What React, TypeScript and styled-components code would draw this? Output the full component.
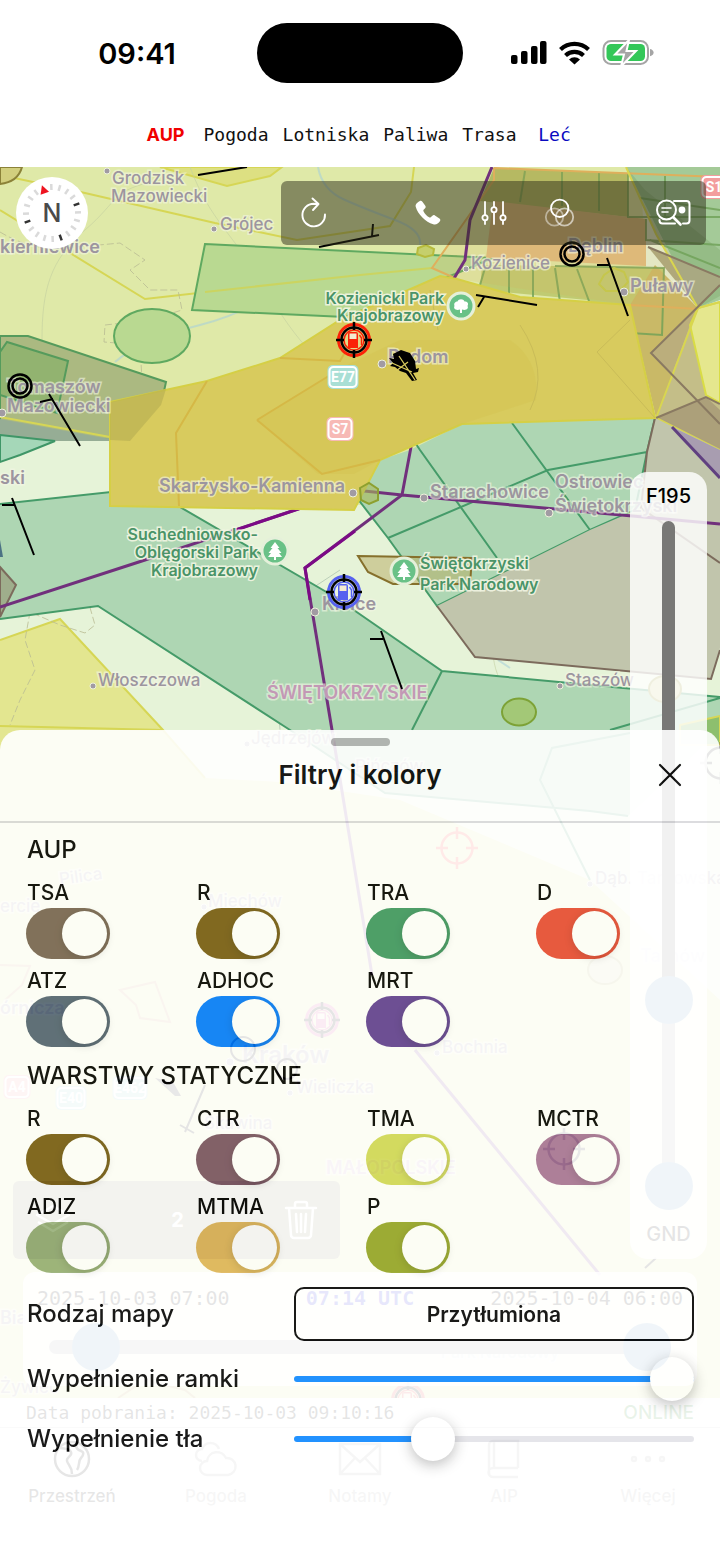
import { useState } from "react";
import styled, { createGlobalStyle } from "styled-components";

type Filter = { name: string; color: string };

const menu = [
  { name: "AUP", color: "#f00000", bold: true },
  { name: "Pogoda", color: "#111" },
  { name: "Lotniska", color: "#111" },
  { name: "Paliwa", color: "#111" },
  { name: "Trasa", color: "#111" },
  { name: "Leć", color: "#0a0ac0" },
];

const aupFilters: Filter[] = [
  { name: "TSA", color: "#776454" },
  { name: "R", color: "#765b14" },
  { name: "TRA", color: "#3e9763" },
  { name: "D", color: "#e84a35" },
  { name: "ATZ", color: "#526374" },
  { name: "ADHOC", color: "#007bff" },
  { name: "MRT", color: "#603e93" },
];

const staticFilters: Filter[] = [
  { name: "R", color: "#765b14" },
  { name: "CTR", color: "#785263" },
  { name: "TMA", color: "#d2d95a" },
  { name: "MCTR", color: "#a77399" },
  { name: "ADIZ", color: "#96ae77" },
  { name: "MTMA", color: "#dfb55b" },
  { name: "P", color: "#95a42a" },
];

const App = () => {
  const [frame, setFrame] = useState(100);
  const [background, setBackground] = useState(33);
  const [open, setOpen] = useState(true);

  return (
    <Screen>
      <GlobalStyle />
      <StatusBar>
        <Clock>09:41</Clock>
        <Island />
        <StatusIcons />
      </StatusBar>
      <Menu>
        {menu.map((item) => (
          <MenuButton key={item.name} $color={item.color} $bold={item.bold}>
            {item.name}
          </MenuButton>
        ))}
      </Menu>

      <MapArea>
        <AirspaceMap />
        <MapTop>
          <Compass />
          <Toolbar>
            <ToolButton aria-label="Odśwież">
              <RefreshIcon />
            </ToolButton>
            <ToolGroup>
              <ToolButton aria-label="Telefon">
                <PhoneIcon />
              </ToolButton>
              <ToolButton aria-label="Ustawienia">
                <SlidersIcon />
              </ToolButton>
              <ToolButton aria-label="Filtry" onClick={() => setOpen(true)}>
                <CirclesIcon />
              </ToolButton>
            </ToolGroup>
            <ToolButton aria-label="Szukaj">
              <SearchIcon />
            </ToolButton>
          </Toolbar>
        </MapTop>
        <MapMiddle>
          <LayerBox>
            <LayersIcon />
            <b>2</b>
            <TrashIcon />
          </LayerBox>
          <LevelPanel>
            <LevelLabel>F195</LevelLabel>
            <LevelTrack>
              <LevelRange type="range" aria-label="Górny poziom" defaultValue={29} />
              <LevelRange type="range" aria-label="Dolny poziom" defaultValue={0} />
            </LevelTrack>
            <LevelLabel>GND</LevelLabel>
          </LevelPanel>
        </MapMiddle>
        <TimePanel>
          <TimeRow>
            <span>2025-10-03 07:00</span>
            <TimeNow>07:14 UTC</TimeNow>
            <span>2025-10-04 06:00</span>
          </TimeRow>
          <TimeTrack>
            <TimeRange type="range" aria-label="Początek" defaultValue={4} />
            <TimeRange type="range" aria-label="Koniec" defaultValue={100} />
          </TimeTrack>
        </TimePanel>
      </MapArea>

      <InfoRow>
        <span>Data pobrania: 2025-10-03 09:10:16</span>
        <Online>ONLINE</Online>
      </InfoRow>
      <Tabs />

      {open && (
        <Sheet>
          <Handle />
          <SheetHeader>
            <h1>Filtry i kolory</h1>
            <CloseButton aria-label="Zamknij" onClick={() => setOpen(false)}>
              <svg width="24" height="24" viewBox="0 0 24 24" fill="none" stroke="#000" strokeWidth="2.2" strokeLinecap="round">
                <path d="M2 2l20 20M22 2L2 22" />
              </svg>
            </CloseButton>
          </SheetHeader>
          <SheetBody>
            <FilterSection title="AUP" prefix="aup" filters={aupFilters} />
            <FilterSection title="WARSTWY STATYCZNE" prefix="static" filters={staticFilters} />
            <Settings>
              <SettingLabel htmlFor="map-type">Rodzaj mapy</SettingLabel>
              <MapTypeButton id="map-type">Przytłumiona</MapTypeButton>
              <SettingLabel htmlFor="frame">Wypełnienie ramki</SettingLabel>
              <Range
                id="frame"
                type="range"
                value={frame}
                $value={frame}
                onChange={(e) => setFrame(Number(e.target.value))}
              />
              <SettingLabel htmlFor="background">Wypełnienie tła</SettingLabel>
              <Range
                id="background"
                type="range"
                value={background}
                $value={background}
                onChange={(e) => setBackground(Number(e.target.value))}
              />
            </Settings>
          </SheetBody>
        </Sheet>
      )}
    </Screen>
  );
};

export default App;

const FilterSection = ({ title, prefix, filters }: { title: string; prefix: string; filters: Filter[] }) => (
  <section>
    <SectionTitle>{title}</SectionTitle>
    <FilterGrid>
      {filters.map(({ name, color }) => (
        <FilterItem key={name}>
          <label htmlFor={prefix + name}>{name}</label>
          <Switch id={prefix + name} type="checkbox" defaultChecked $color={color} />
        </FilterItem>
      ))}
    </FilterGrid>
  </section>
);

const StatusIcons = () => (
  <svg width="144" height="28" viewBox="511 40 144 28">
    <g fill="#000">
      <rect x="511" y="56" width="6.5" height="9" rx="2" />
      <rect x="521" y="52" width="6.5" height="13" rx="2" />
      <rect x="531" y="47" width="6.5" height="18" rx="2" />
      <rect x="540" y="42" width="6.5" height="23" rx="2" />
      <path d="M574.5 65.5l-5.5-5a8 8 0 0 1 11 0z" />
    </g>
    <g fill="none" stroke="#000" strokeWidth="4.2">
      <path d="M560.5 50.5a20.5 20.500 0 0 1 28 0" />
      <path d="M565.5 56.500a13.2 13.2 0 0 1 18 0" />
    </g>
    <rect x="603.5" y="42" width="44.5" height="23" rx="7.5" fill="#fff" stroke="#a5a5a5" strokeWidth="2" />
    <rect x="606.5" y="45" width="38.5" height="17" rx="4.5" fill="#34c759" />
    <path d="M650 50c2.6.6 3.6 2 3.6 3.6s-1 3-3.6 3.6z" fill="#a5a5a5" />
    <path d="M629 41l-14 14.5h9l-3 12 15-15.5h-9.5z" fill="#a5a5a5" stroke="#fff" strokeWidth="2" />
  </svg>
);

const Compass = () => (
  <CompassButton aria-label="Północ">
    <svg width="72" height="72" viewBox="-36 -36 72 72">
      <g transform="rotate(-20)">
        {Array.from({ length: 20 }, (_, i) => i)
          .filter((i) => i > 0)
          .map((i) => (
            <rect
              key={i}
              x="-1"
              y="-29"
              width="2.500"
              height="6"
              fill={i % 5 === 0 ? "#333" : "#dadada"}
              transform={`rotate(${i * 18})`}
            />
          ))}
        <path d="M-4.5 -21L0 -29.5L4.5 -21z" fill="#ee1420" />
      </g>
      <text y="9" textAnchor="middle" fontSize="25" fontWeight="500" fill="#4a4a4a">
        N
      </text>
    </svg>
  </CompassButton>
);

const RefreshIcon = () => (
  <svg width="32" height="32" viewBox="0 0 32 32" fill="none" stroke="#fff" strokeWidth="1.9" strokeLinecap="round" strokeLinejoin="round">
    <path d="M27 17.5A11.3 11.3 0 1 1 15.7 6.8L20 7" />
    <path d="M14.5 1.5L20.5 7L15 13" />
  </svg>
);

const PhoneIcon = () => (
  <svg width="28" height="28" viewBox="0 0 28 28" fill="#fff">
    <path d="M5.5 2.2c1-.7 2.100-.5 2.9.5l2.9 4c.6.9.5 1.7-.2 2.5L9.6 10.7c-.4.5-.4 1 0 1.7 1.2 2.3 3.2 4.3 5.5 5.9.6.4 1.100.4 1.6-.1l1.7-1.5c.8-.7 1.6-.8 2.5-.2l4.5 3c1 .7 1.2 1.7.5 2.7-1.5 2.4-3.8 3.7-6.7 3C11.7 23.5 3.8 15 1.8 8 1 5.4 3 3.6 5.5 2.2z" />
  </svg>
);

const SlidersIcon = () => (
  <svg width="26" height="26" viewBox="0 0 26 26" fill="none" stroke="#fff" strokeWidth="1.8" strokeLinecap="round">
    <path d="M4 2v13M4 20.5V24M13 2v5M13 12.5V24M22 2v13M22 20.5V24" />
    <circle cx="4" cy="17.7" r="2.6" />
    <circle cx="13" cy="9.7" r="2.6" />
    <circle cx="22" cy="17.7" r="2.6" />
  </svg>
);

const CirclesIcon = () => (
  <svg width="32" height="32" viewBox="0 0 32 32" fill="none" stroke="#fff" strokeWidth="1.8">
    <circle cx="10.500" cy="20" r="8.7" opacity="0.45" />
    <circle cx="20.500" cy="20" r="8.7" opacity="0.6" />
    <circle cx="15.700" cy="11.3" r="8.7" />
  </svg>
);

const SearchIcon = () => (
  <svg width="36" height="30" viewBox="0 0 36 30" fill="none" stroke="#fff" strokeWidth="2" strokeLinecap="round">
    <path d="M19 3h12.5a3 3 0 0 1 3 3v16.500a3 3 0 0 1-3 3H28M20 25.5H7.5a3 3 0 0 1-3-3V22" />
    <circle cx="11.5" cy="12" r="9.5" />
    <path d="M18.5 19.500l7 7" strokeWidth="2.6" />
    <path d="M7 10h9M7 14h6" strokeWidth="1.6" />
    <circle cx="27" cy="12" r="2.4" fill="#fff" />
  </svg>
);

const LayersIcon = () => (
  <svg width="36" height="36" viewBox="0 0 36 36" fill="none" stroke="#fff" strokeWidth="2.5" strokeLinejoin="round">
    <path d="M18 4L34 13L18 22L2 13zM3 20l15 9 15-9" />
  </svg>
);

const TrashIcon = () => (
  <svg width="34" height="40" viewBox="0 0 34 40" fill="none" stroke="#fff" strokeWidth="2.5" strokeLinecap="round" strokeLinejoin="round">
    <path d="M2 8h30M11 8V4a2 2 0 0 1 2-2h8a2 2 0 0 1 2 2v4M5 8l2 27a3 3 0 0 0 3 3h14a3 3 0 0 0 3-3l2-27M12 14l1 18M17 14v18M22 14l-1 18" />
  </svg>
);

const Tabs = () => (
  <TabBar>
    <Tab href="#przestrzen" $active>
      <svg viewBox="0 0 40 40">
        <circle cx="20" cy="20" r="17" />
        <path d="M8 9c5 1 9 0 11 4s-5 5-4 9 5 5 5 13M25 5c-2 4 1 6 4 7s3 4 0 7-1 8-4 12" />
      </svg>
      Przestrzeń
    </Tab>
    <Tab href="#pogoda">
      <svg viewBox="0 0 48 40">
        <path d="M15 36a7 7 0 0 1 0-14 10 10 0 0 1 19-3 8.5 8.5 0 0 1 2 17zM10 22c-8-1-8-11 0-12 3-8 14-8 17 0" />
      </svg>
      Pogoda
    </Tab>
    <Tab href="#notamy">
      <svg viewBox="0 0 46 40">
        <path d="M3 5h40v30H3zM3 5l20 18L43 5M3 35l15-16M43 35L28 19" />
      </svg>
      Notamy
    </Tab>
    <Tab href="#aip">
      <svg viewBox="0 0 40 40">
        <path d="M34 29V2H9a4 4 0 0 0-4 4v28a4 4 0 0 0 4 4h25M34 29H9a4 4 0 0 0 0 9M10 2v27" />
      </svg>
      AIP
    </Tab>
    <Tab href="#wiecej">
      <svg viewBox="0 0 40 40">
        <circle cx="6" cy="20" r="2" />
        <circle cx="20" cy="20" r="2" />
        <circle cx="34" cy="20" r="2" />
      </svg>
      Więcej
    </Tab>
  </TabBar>
);

const FuelMarker = ({ x, y, color }: { x: number; y: number; color: string }) => (
  <g transform={`translate(${x} ${y})`}>
    <circle r="15.5" fill="#fff" fillOpacity="0.25" stroke={color} strokeWidth="3" />
    <circle r="10" fill="none" stroke={color} strokeWidth="1.5" />
    <path d="M-6 8V-6a2 2 0 0 1 2-2h6a2 2 0 0 1 2 2V8z" fill={color} />
    <rect x="-4.5" y="-6.5" width="7" height="5.5" fill="#f4ead0" />
    <path d="M5.5 -5l2 3V5" fill="none" stroke={color} strokeWidth="1.5" />
    <circle r="12.500" fill="none" stroke="#000" strokeWidth="2.500" />
    <path d="M-18 0h8M10 0h8M0 -18v8M0 10v8" stroke="#000" strokeWidth="2.500" />
  </g>
);

const Target = ({ x, y, color }: { x: number; y: number; color: string }) => (
  <g transform={`translate(${x} ${y})`} fill="none" stroke={color} strokeWidth="2.500">
    <circle r="15.500" />
    <path d="M-21 0h12M9 0h12M0 -21v12M0 9v12" />
  </g>
);

const DoubleRing = ({ x, y }: { x: number; y: number }) => (
  <g fill="none" stroke="#000" strokeWidth="2.5">
    <circle cx={x} cy={y} r="11.5" />
    <circle cx={x} cy={y} r="7.5" />
  </g>
);

const ParkPin = ({ x, y, leaf }: { x: number; y: number; leaf?: boolean }) => (
  <g transform={`translate(${x} ${y})`}>
    <circle r="13" fill="#69c187" stroke="#e5f0da" strokeWidth="3" />
    {leaf ? (
      <path d="M-1 7V3.5c-4 1.5-7-1-5.5-3.5-1-3 1-4.5 3-4.5 1-3 6-3 7 0 3 0 4.5 2 3 4.5C8 2.5 5 5 1 3.5V7z" fill="#fff" />
    ) : (
      <path d="M0 -9l4.5 6H2.5l4 5H4l3 4H1v3h-2V6h-6l3-4h-2.5l4-5h-2z" fill="#fff" />
    )}
  </g>
);

const Shield = ({ x, y, w, color, text }: { x: number; y: number; w: number; color: string; text: string }) => (
  <g>
    <rect x={x - w / 2} y={y - 12} width={w} height="24" rx="5" fill={color} />
    <rect x={x - w / 2 + 2} y={y - 10} width={w - 4} height="20" rx="4" fill="none" stroke="#fff" strokeWidth="2" />
    <ShieldText x={x} y={y + 5}>
      {text}
    </ShieldText>
  </g>
);

const places = [
  { x: 112, y: 184, text: "Grodzisk" },
  { x: 111, y: 202, text: "Mazowiecki" },
  { x: 220, y: 230, text: "Grójec" },
  { x: 471, y: 269, text: "Kozienice" },
  { x: 98, y: 686, text: "Włoszczowa" },
  { x: 565, y: 686, text: "Staszów" },
  { x: 251, y: 744, text: "Jędrzejów" },
  { x: 355, y: 772, text: "Pińczów" },
  { x: 208, y: 907, text: "Miechów" },
  { x: 442, y: 1053, text: "Bochnia" },
  { x: 296, y: 1093, text: "Wieliczka" },
  { x: 204, y: 1129, text: "Skawina" },
  { x: 595, y: 884, text: "Dąb. Tarnowska" },
  { x: 0, y: 912, text: "ercie" },
  { x: 0, y: 1393, text: "Żywiec" },
];

const bigPlaces = [
  { x: 0, y: 253, text: "kierniewice" },
  { x: 568, y: 252, text: "Dęblin" },
  { x: 630, y: 292, text: "Puławy" },
  { x: 388, y: 363, text: "Radom" },
  { x: 7, y: 393, text: "Tomaszów" },
  { x: 7, y: 412, text: "Mazowiecki" },
  { x: 0, y: 484, text: "ski" },
  { x: 159, y: 492, text: "Skarżysko-Kamienna" },
  { x: 430, y: 498, text: "Starachowice" },
  { x: 555, y: 488, text: "Ostrowiec" },
  { x: 555, y: 512, text: "Świętokrzyski" },
  { x: 322, y: 610, text: "Kielce" },
  { x: 0, y: 1014, text: "órnicza" },
  { x: 640, y: 962, text: "Tarnów" },
  { x: 0, y: 1324, text: "Bia" },
];

const parks = [
  { x: 444, y: 304, text: "Kozienicki Park", anchor: "end" },
  { x: 444, y: 321, text: "Krajobrazowy", anchor: "end" },
  { x: 258, y: 540, text: "Suchedniowsko-", anchor: "end" },
  { x: 258, y: 558, text: "Oblęgorski Park", anchor: "end" },
  { x: 258, y: 576, text: "Krajobrazowy", anchor: "end" },
  { x: 420, y: 569, text: "Świętokrzyski", anchor: "start" },
  { x: 420, y: 590, text: "Park Narodowy", anchor: "start" },
  { x: 500, y: 1358, text: "Park Narodowy", anchor: "middle" },
] as const;

const dots = [
  [107, 171, 3], [214, 229, 3], [466, 269, 3], [624, 292, 4], [382, 364, 4], [2, 413, 4],
  [353, 493, 4], [424, 498, 4], [549, 513, 4], [315, 612, 4], [93, 686, 3], [560, 686, 3],
  [247, 744, 3], [204, 907, 3], [437, 1053, 3], [290, 1093, 3], [590, 884, 3], [230, 1062, 4],
];

const AirspaceMap = () => (
  <MapSvg viewBox="0 167 720 1231" preserveAspectRatio="xMidYMin slice">
    <rect y="167" width="720" height="1231" fill="#e6f3d8" />

    {/* TMA */}
    <path d="M0 167H640L655 418L460 424L370 505H110V437L0 417z" fill="#dfe9a8" />
    <path d="M0 640L60 619L163 730L205 778L280 782L400 800L590 880L720 1000V1398H0z" fill="#e3e690" />
    <g fill="none" stroke="#d6d655" strokeWidth="2">
      <path d="M0 175L85 193L215 223L297 240L390 226L411 192L414 167" />
      <path d="M0 210L145 299L360 275L432 268L457 256" />
      <path d="M0 640L60 619L163 730L205 778M0 726L163 730" />
    </g>
    <path d="M160 167L227 186L270 176L282 167z" fill="#dde082" stroke="#d6d655" strokeWidth="2" />
    <path d="M0 167H22Q18 182 0 184z" fill="#d2cf7e" stroke="#8b8238" strokeWidth="2" />

    {/* terrain */}
    <g fill="none" stroke="#c3cfa0" strokeOpacity="0.6" strokeWidth="1">
      <path d="M42 340C42 290 50 260 85 230S110 190 160 180M190 167C210 220 230 230 260 280S330 400 420 400M480 590C500 620 485 650 500 680M520 480C560 520 590 560 640 590" />
      <path d="M276 655V612L340 570M280 730L275 655M342 620L375 680" stroke="#9fb5a3" />
    </g>
    <g fill="none" stroke="#b9bb94" strokeOpacity="0.8" strokeWidth="1" strokeDasharray="7 3">
      <path d="M0 232Q30 250 60 248T120 243L145 260L130 270L150 290L178 290L182 310L150 320L105 325L104 342L140 345L142 380L165 400L155 440L170 470" />
      <path d="M160 450Q130 510 55 535L48 550L60 590L85 590L95 625L85 633L60 625L30 612L25 640L35 670L20 700L10 725M380 470L440 472L500 465L540 475L560 450L640 430" />
    </g>
    <g fill="none" stroke="#a8d0d8" strokeOpacity="0.6" strokeWidth="2">
      <path d="M318 167Q322 190 345 200T395 220T420 245M300 270Q260 310 200 325T115 362M640 420Q660 440 680 450T700 490" />
      <path d="M498 660l12 8" />
    </g>

    {/* TRA north */}
    <path d="M205 244L493 258L455 274L345 317L192 310z" fill="#b9d991" stroke="#5fa960" strokeWidth="2" />
    <path d="M205 292L360 275L432 268" fill="none" stroke="#cbd460" strokeWidth="2" />
    <ellipse cx="152" cy="336" rx="38" ry="27" fill="#b9d991" stroke="#5fa960" strokeWidth="2" />
    <path d="M0 336H28L166 382L161 405L130 441L0 434z" fill="#abb981" stroke="#559b5c" strokeWidth="2" />
    <path d="M0 352L7 342L68 361L57 413L0 395z" fill="#92b370" stroke="#559b5c" strokeWidth="2" />
    <path d="M0 419L110 439V441L50 441L0 436z" fill="#96ad95" />
    <path d="M0 417L110 437" stroke="#d6d655" strokeWidth="2" />
    <path d="M0 435L55 441L20 455L0 462z" fill="#a5d7b8" stroke="#3f9667" strokeWidth="2" />
    <path d="M0 520Q22 540 15 560T28 610" fill="none" stroke="#8fc5cc" strokeWidth="2" />

    {/* north-east zones */}
    <path d="M626 167H720V300L698 308z" fill="#a4ca98" />
    <path d="M626 167L656 234L698 308L720 296V250L645 190z" fill="#7fa86c" fillOpacity="0.4" />
    <path d="M494 168L628 173V217L480 201z" fill="#b0bc66" />
    <path d="M493 201L646 219V266L486 258z" fill="#dfbd80" />
    <path d="M482 265L555 266L664 268L662 335L587 300L480 290z" fill="#c0cb72" />
    <path d="M655 265L698 308L656 418L630 305z" fill="#c9b967" />
    <path d="M648 247L720 277V285L698 308z" fill="#a9a982" />
    <path d="M698 308L651 353L720 420V450L655 418z" fill="#bbae7c" />
    <path d="M656 418L690 325L706 397L720 405V440z" fill="#c4be88" />
    <path d="M655 418L706 397L720 410V450z" fill="#aca07a" />
    <path d="M720 302L698 308L690 325L706 395L720 403z" fill="#e5e78e" stroke="#d9dc45" strokeWidth="2" />
    <g fill="none" stroke="#6ea056" strokeOpacity="0.8" strokeWidth="2">
      <path d="M525 171L520 202M562 172V206M599 173V211M628 173V217H720M665 176V217M646 219V240L720 245M640 198L720 210M650 240L720 268M555 266L664 268L662 335L630 333" />
      <path d="M485 268L480 285M509 270V294M533 269V299M555 268L560 302M577 269L589 301" />
    </g>
    <path d="M432 268L494 180V168L628 173L698 308L630 305L457 279z" fill="#e0a850" fillOpacity="0.15" />
    <path d="M494 168L720 177M457 279L432 268L494 180V168M630 305L698 309" fill="none" stroke="#dfaf5c" strokeWidth="2" />
    <g fill="none" stroke="#d9d64f" strokeWidth="2">
      <path d="M626 167L656 234L698 308L656 418" />
      <path d="M656 418L720 450M698 308L720 302" />
    </g>
    <g fill="none" stroke="#8a7a62" strokeWidth="2">
      <path d="M648 247L720 277M720 285L651 353L720 424" />
      <path d="M656 418L706 397L720 404" />
    </g>
    <path d="M604 275L614 268L624 272L628 282L620 291L606 291L599 284z" fill="none" stroke="#c5c64c" strokeWidth="2" />
    <path d="M418 248L426 245L434 249L433 255L425 257L417 254z" fill="#c5cf6c" stroke="#b7bb3c" strokeWidth="2" />

    {/* TRA south */}
    <path d="M0 504L148 488L180 507L335 597L442 671L720 697V730L628 816L590 811L385 793L290 730L98 606L0 619z" fill="#aed6b3" />
    <path d="M0 504L148 488L180 507L335 597L442 671L720 697M0 619L98 606L290 730L385 793L590 811L628 816M442 671L412 730M610 730L720 698M590 880L540 780L552 748L630 733" fill="none" stroke="#459b69" strokeWidth="2" />
    <path d="M354 494L380 460L410 450L462 424L655 418L641 508L437 606L388 538z" fill="#aed6b3" />
    <path d="M354 494L388 538L437 606L590 530L635 510L647 452L655 418M388 538L548 470L647 452M416 444L420 450L497 558M512 423L590 530" fill="none" stroke="#459b69" strokeWidth="2" />
    <path d="M655 418L720 450V648L711 679L475 657L437 606L590 530L641 508L647 452z" fill="#c1c5ac" />
    <path d="M655 418L647 452L641 508L720 563M437 606L475 657L711 679L720 650" fill="none" stroke="#7c6b5c" strokeWidth="2" />
    <path d="M672 427L720 450V478z" fill="#a89db0" />
    <path d="M672 427L720 478" stroke="#604080" strokeWidth="3" />
    <path d="M680 725L720 716V745H680z" fill="#8dbf6e" stroke="#d6d655" strokeWidth="2" />
    <path d="M358 556L472 558L470 584H393L368 572z" fill="#b5a95f" fillOpacity="0.5" stroke="#86702c" strokeWidth="2" />
    <path d="M0 567L16 585L0 617z" fill="#9fae8c" stroke="#7c6b5c" strokeWidth="2" />
    <path d="M0 540l3 17h-3z" fill="#4c7284" />

    {/* MRT corridor */}
    <path d="M0 607L145 560L280 515L355 490L402 495L720 524M492 167L470 220L465 260L450 285L411 447L402 495L305 568L332 730L372 975M415 1050L600 1275" fill="none" stroke="#71307c" strokeWidth="3" />
    <path d="M230 532L340 495M355 531L305 568L310 600" stroke="#7c0a86" fill="none" strokeWidth="3" />

    {/* ADHOC */}
    <path d="M110 402L207 381L280 358L340 320L440 276L457 279L520 297L630 305L655 418L462 424L410 447L380 460L354 510L110 506z" fill="#d8cb5e" stroke="#d5cf45" strokeWidth="2" />
    <path d="M110 402L166 389L161 405L130 441L110 440z" fill="#b5ad51" fillOpacity="0.6" />
    <path d="M257 420L345 366L400 340H510Q540 360 536 400L462 424L380 460L354 474L318 474z" fill="#d2c04d" fillOpacity="0.3" />
    <path d="M179 506L176 433L207 381M280 358L340 361L352 340M257 420L345 366M257 420L322 474L380 460" fill="none" stroke="#d5b846" strokeWidth="2" />
    <path d="M438 330L430 290M520 325Q550 370 530 410M630 320L597 352L655 418" fill="none" stroke="#c9bc58" strokeWidth="1" />
    <path d="M360 488L369 483L378 489V500L369 504L361 500z" fill="#a9b85a" fillOpacity="0.6" stroke="#8da02f" strokeWidth="2" />
    <ellipse cx="519" cy="712" rx="17" ry="13.5" fill="#a3c877" stroke="#7da236" strokeWidth="2" />
    <ellipse cx="665" cy="689" rx="16" ry="13" fill="#d6d79a" stroke="#a8a64e" strokeWidth="2" />
    <ellipse cx="605" cy="970" rx="17" ry="14" fill="#d6d79a" stroke="#a8a64e" strokeWidth="2" />
    <path d="M0 965L30 966L22 985L5 1000M120 990L155 982L170 1022L140 1018L136 1005z" fill="none" stroke="#c99b6a" strokeWidth="2" />
    <path d="M118 1398L145 1380L185 1390L195 1398" fill="none" stroke="#b79b50" strokeWidth="2" />

    {dots.map(([x, y, r]) => (
      <circle key={`${x}-${y}`} cx={x} cy={y} r={r} fill="#a19ba3" stroke="#eef2dc" strokeWidth="1" />
    ))}
    {places.map((p) => (
      <Place key={p.text} x={p.x} y={p.y}>
        {p.text}
      </Place>
    ))}
    {bigPlaces.map((p) => (
      <Place key={p.text} x={p.x} y={p.y} $big>
        {p.text}
      </Place>
    ))}
    <Place x="60" y="885" transform="rotate(-8 60 885)">
      Pilica
    </Place>
    <City x="242" y="1063">
      Kraków
    </City>
    <Region x="267" y="699">
      ŚWIĘTOKRZYSKIE
    </Region>
    <Region x="326" y="1174">
      MAŁOPOLSKIE
    </Region>
    {parks.map((p) => (
      <ParkName key={p.y} x={p.x} y={p.y} textAnchor={p.anchor}>
        {p.text}
      </ParkName>
    ))}
    <ParkPin x={461} y={306} leaf />
    <ParkPin x={275} y={551} />
    <ParkPin x={404} y={571} />

    <Shield x={343} y={377} w={31} color="#a9dfd5" text="E77" />
    <Shield x={340} y={429} w={27} color="#f7b9b5" text="S7" />
    <Shield x={714} y={187} w={27} color="#f39d9d" text="S1" />
    <Shield x={17} y={1087} w={27} color="#f3a0a0" text="A4" />
    <Shield x={71} y={1098} w={31} color="#9bd9cf" text="E40" />
    <Shield x={130} y={1088} w={35} color="#9bd9cf" text="E462" />

    <g fill="none" stroke="#000" strokeWidth="2">
      <path d="M198 175L247 167M319 247L379 235M373 224L372 236" />
      <path d="M607 258L628 316M597 265H609M476 295L537 305M484 297L478 307" />
      <path d="M49 394L80 446M40 402L53 399M12 498L34 555M2 505H15" />
      <path d="M381 631L402 689M370 639H383M205 1085L185 1132M180 1125L194 1133M645 1268L656 1258" />
    </g>
    <path d="M393 354l8-4 9 3 5 8 1 8 3-1-1 4-5 1 4 7-5 1-6-8-6-2-5-4-5-1 3-3-4-5 5 1z" fill="#000" />
    <path d="M399 356L415 380M392 363L412 372M396 371L408 362" stroke="#d8cb5e" strokeWidth="1.3" />
    <DoubleRing x={572} y={254} />
    <DoubleRing x={20} y={386} />
    <FuelMarker x={354} y={340} color="#fb2208" />
    <FuelMarker x={344} y={592} color="#5661ef" />
    <FuelMarker x={322} y={1020} color="#d5478f" />
    <FuelMarker x={408} y={1400} color="#e04040" />
    <Target x={457} y={848} color="#fb3020" />
    <Target x={564} y={1149} color="#222" />
    <Target x={721} y={763} color="#222" />
    <circle cx="243" cy="1049" r="12" fill="none" stroke="#000" strokeWidth="2" />
    <circle cx="287" cy="1069" r="10" fill="none" stroke="#000" strokeWidth="2" />
    <path d="M155 1078l18 4 8 14h-6z" fill="#222" />
  </MapSvg>
);

const GlobalStyle = createGlobalStyle`
  * {
    box-sizing: border-box;
  }
  body {
    margin: 0;
    background: #fff;
    color: #000;
    font-family: Inter, "Liberation Sans", sans-serif;
  }
  button {
    padding: 0;
    border: 0;
    background: none;
    color: inherit;
    font: inherit;
    cursor: pointer;
  }
  input[type="range"] {
    margin: 0;
    appearance: none;
    background: none;
  }
`;

const Screen = styled.div`
  position: relative;
  display: flex;
  flex-direction: column;
  min-height: 100vh;
  overflow: hidden;
`;

const StatusBar = styled.header`
  display: grid;
  grid-template-columns: 1fr 206px 1fr;
  align-items: center;
  justify-items: center;
  padding: 23px 17px 0;
`;

const Clock = styled.div`
  font-size: 29px;
  font-weight: 600;
`;

const Island = styled.div`
  width: 100%;
  height: 60px;
  border-radius: 30px;
  background: #000;
`;

const Menu = styled.nav`
  display: flex;
  justify-content: center;
  padding: 40px 0 20px;
`;

const MenuButton = styled.button<{ $color: string; $bold?: boolean }>`
  && {
    min-width: 62px;
    padding: 0 7px;
    color: ${({ $color }) => $color};
    font-family: ${({ $bold }) => ($bold ? "Inter, sans-serif" : '"DejaVu Sans Mono", monospace')};
    font-size: 18px;
    font-weight: ${({ $bold }) => ($bold ? 700 : 400)};
    line-height: 24px;
  }
`;

const MapArea = styled.main`
  position: relative;
  display: flex;
  flex: 1;
  flex-direction: column;
  padding-bottom: 12px;
  overflow: hidden;
`;

const MapSvg = styled.svg`
  position: absolute;
  inset: 0;
  width: 100%;
  height: 100%;
`;

const Place = styled.text<{ $big?: boolean }>`
  fill: #9c959f;
  stroke: #f3f6e4;
  stroke-opacity: 0.6;
  stroke-width: 3px;
  paint-order: stroke;
  font-size: ${({ $big }) => ($big ? 18 : 17)}px;
  font-weight: ${({ $big }) => ($big ? 600 : 500)};
`;

const City = styled(Place)`
  font-size: 24px;
  font-weight: 600;
`;

const Region = styled(Place)`
  fill: #c398b5;
  font-size: 18px;
  font-weight: 600;
`;

const ParkName = styled(Place)`
  fill: #4a9468;
  stroke-opacity: 0.9;
  font-size: 16px;
  font-weight: 600;
`;

const ShieldText = styled.text`
  fill: #fff;
  text-anchor: middle;
  font-family: "Liberation Sans Narrow", Roboto, sans-serif;
  font-size: 14px;
  font-weight: 700;
`;

const MapTop = styled.div`
  position: relative;
  display: flex;
  align-items: center;
  justify-content: space-between;
  padding: 10px 14px 0 16px;
`;

const CompassButton = styled.button`
  && {
    width: 72px;
    height: 72px;
    border-radius: 50%;
    background: #fff;
  }
`;

const Toolbar = styled.div`
  display: flex;
  flex: 0 1 425px;
  align-items: center;
  justify-content: space-between;
  height: 64px;
  border-radius: 6px;
  background: rgba(45, 45, 25, 0.5);
`;

const ToolGroup = styled.div`
  display: flex;
`;

const ToolButton = styled.button`
  display: grid;
  place-items: center;
  width: 66px;
  height: 64px;
`;

const MapMiddle = styled.div`
  position: relative;
  display: flex;
  flex: 1;
  align-items: flex-end;
  justify-content: space-between;
  padding: 0 13px;
`;

const LayerBox = styled.div`
  display: flex;
  align-items: center;
  justify-content: space-between;
  width: 327px;
  height: 78px;
  padding: 0 22px;
  border-radius: 6px;
  background: rgba(45, 45, 45, 0.5);
  color: #fff;
  font-size: 20px;
`;

const LevelPanel = styled.div`
  display: flex;
  flex-direction: column;
  align-items: center;
  align-self: stretch;
  width: 77px;
  margin-top: 223px;
  padding: 10px 0;
  border-radius: 18px;
  background: rgba(255, 255, 255, 0.82);
`;

const LevelLabel = styled.div`
  font-size: 20px;
  font-weight: 500;
  line-height: 29px;
`;

const LevelTrack = styled.div`
  position: relative;
  flex: 1;
  width: 13px;
  margin: 10px 0;
  border-radius: 7px;
  background: linear-gradient(#787876 70%, #b4b4b4 70%);
`;

const LevelRange = styled.input`
  position: absolute;
  inset: 0 -18px;
  width: 49px;
  height: 100%;
  writing-mode: vertical-lr;
  direction: rtl;
  pointer-events: none;

  &::-webkit-slider-thumb {
    appearance: none;
    width: 48px;
    height: 48px;
    border-radius: 50%;
    background: #6f9fc4;
    pointer-events: auto;
  }
`;

const TimePanel = styled.div`
  position: relative;
  height: 114px;
  margin: 13px 23px 0;
  padding: 10px 14px;
  border-radius: 12px;
  background: rgba(255, 255, 255, 0.82);
`;

const TimeRow = styled.div`
  display: flex;
  justify-content: space-between;
  font-family: "DejaVu Sans Mono", monospace;
  font-size: 20px;
  line-height: 32px;
`;

const TimeNow = styled.span`
  color: #1515d8;
  font-weight: 700;
`;

const TimeTrack = styled.div`
  position: relative;
  height: 14px;
  margin: 26px 12px 0;
  border-radius: 7px;
  background: #b4b4b4;
`;

const TimeRange = styled.input`
  position: absolute;
  inset: -17px 0;
  width: 100%;
  height: 48px;
  pointer-events: none;

  &::-webkit-slider-thumb {
    appearance: none;
    width: 48px;
    height: 48px;
    border-radius: 50%;
    background: #6f9fc4;
    pointer-events: auto;
  }
`;

const InfoRow = styled.div`
  display: flex;
  justify-content: space-between;
  padding: 0 26px;
  border-bottom: 1px solid #ccc;
  font-family: "DejaVu Sans Mono", monospace;
  font-size: 18px;
  line-height: 29px;
`;

const Online = styled.span`
  color: #2f8a2f;
  font-family: Inter, sans-serif;
  font-size: 19px;
  font-weight: 500;
`;

const TabBar = styled.nav`
  display: grid;
  grid-template-columns: repeat(5, 1fr);
  padding: 11px 0 57px;
`;

const Tab = styled.a<{ $active?: boolean }>`
  display: flex;
  flex-direction: column;
  align-items: center;
  gap: 6px;
  color: ${({ $active }) => ($active ? "#111" : "#a8a8a8")};
  font-size: 17px;
  font-weight: 500;
  line-height: 22px;
  text-decoration: none;

  svg {
    height: 40px;
    fill: none;
    stroke: currentColor;
    stroke-width: 2.5px;
  }
`;

const Sheet = styled.div`
  position: absolute;
  right: 0;
  bottom: 0;
  left: 0;
  padding-top: 8px;
  border-radius: 20px;
  background: #fff;
  opacity: 0.9;
`;

const Handle = styled.div`
  width: 59px;
  height: 8px;
  margin: 0 auto;
  border-radius: 4px;
  background: #b0b0b0;
`;

const SheetHeader = styled.header`
  display: grid;
  grid-template-columns: 48px 1fr 48px;
  align-items: start;
  height: 77px;
  padding: 9px 26px 0;
  border-bottom: 2px solid #d8d8dc;

  h1 {
    grid-column: 2;
    margin: 0;
    font-size: 26px;
    font-weight: 600;
    line-height: 40px;
    text-align: center;
  }
`;

const CloseButton = styled.button`
  display: grid;
  place-items: center;
  width: 48px;
  height: 40px;
`;

const SheetBody = styled.div`
  display: flex;
  flex-direction: column;
  gap: 14px;
  padding: 12px 0 103px;
`;

const SectionTitle = styled.h2`
  margin: 0 27px 14px;
  font-size: 24px;
  font-weight: 500;
  line-height: 30px;
`;

const FilterGrid = styled.div`
  display: grid;
  grid-template-columns: repeat(4, 1fr);
  row-gap: 8px;
  padding: 0 14px 0 26px;
`;

const FilterItem = styled.div`
  display: flex;
  flex-direction: column;
  align-items: flex-start;
  gap: 1px;

  label {
    padding-left: 1px;
    font-size: 21px;
    font-weight: 500;
    line-height: 28px;
  }
`;

const Switch = styled.input<{ $color: string }>`
  appearance: none;
  width: 84px;
  height: 51px;
  margin: 0;
  padding: 3px;
  border-radius: 26px;
  background: #ccc;
  cursor: pointer;

  &::before {
    content: "";
    display: block;
    width: 45px;
    height: 45px;
    border-radius: 50%;
    background: #fff;
    box-shadow: 0 2px 8px rgba(0, 0, 0, 0.15);
  }

  &:checked {
    background: ${({ $color }) => $color};
  }

  &:checked::before {
    margin-left: 33px;
  }
`;

const Settings = styled.div`
  display: grid;
  grid-template-columns: minmax(0, 2fr) minmax(0, 3fr);
  align-items: center;
  row-gap: 16px;
  padding: 0 26px 0 27px;
`;

const SettingLabel = styled.label`
  font-size: 24px;
  font-weight: 500;
  line-height: 32px;
`;

const MapTypeButton = styled.button`
  && {
    height: 54px;
    border: 2px solid #000;
    border-radius: 10px;
    font-size: 21px;
    font-weight: 600;
  }
`;

const Range = styled.input<{ $value: number }>`
  width: 100%;
  height: 44px;

  &::-webkit-slider-runnable-track {
    height: 6px;
    border-radius: 3px;
    background: linear-gradient(
      90deg,
      #0a86ff ${({ $value }) => $value}%,
      #e3e3e8 ${({ $value }) => $value}%
    );
  }

  &::-webkit-slider-thumb {
    appearance: none;
    width: 44px;
    height: 44px;
    margin-top: -19px;
    border-radius: 50%;
    background: #fff;
    box-shadow: 0 4px 14px rgba(0, 0, 0, 0.28);
  }
`;
